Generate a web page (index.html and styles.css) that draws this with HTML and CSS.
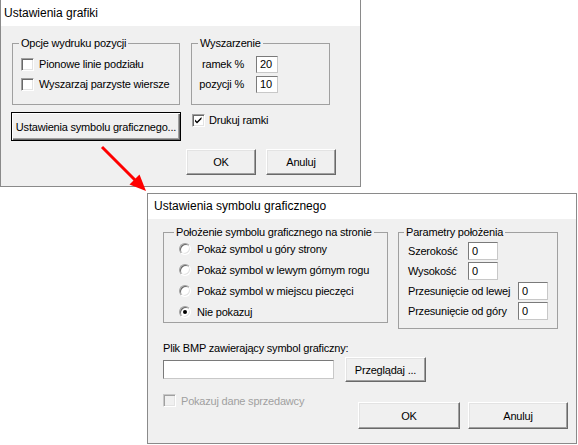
FILE: index.html
```html
<!DOCTYPE html>
<html lang="pl">
<head>
  <meta charset="UTF-8" />
  <title>Ustawienia grafiki</title>
  <link rel="stylesheet" href="styles.css">
</head>
<body>
  <div class="win win-main">
    <div class="title">Ustawienia grafiki</div>
    <div class="client main-client">
      <div class="groups">
        <div class="group group-print">
          <span class="legend">Opcje wydruku pozycji</span>
          <div class="rows">
            <div class="check"><span class="box"></span>Pionowe linie podziału</div>
            <div class="check"><span class="box"></span>Wyszarzaj parzyste wiersze</div>
          </div>
        </div>
        <div class="group group-gray">
          <span class="legend">Wyszarzenie</span>
          <div class="pct">
            <span class="pct-label">ramek %</span><span class="field field-pct">20</span>
            <span class="pct-label">pozycji %</span><span class="field field-pct">10</span>
          </div>
        </div>
      </div>
      <div class="mid-row">
        <button class="btn btn-default btn-symbol">Ustawienia symbolu graficznego...</button>
        <div class="check check-frames">
          <span class="box">
            <svg width="11" height="11" viewBox="0 0 11 11"><path d="M2 4.5 L4 6.5 L8.5 2 L8.5 4 L4 8.5 L2 6.5 Z" fill="#000"/></svg>
          </span>Drukuj ramki
        </div>
      </div>
      <div class="actions main-actions">
        <button class="btn btn-small">OK</button>
        <button class="btn btn-small">Anuluj</button>
      </div>
    </div>
  </div>

  <div class="win win-symbol">
    <div class="title">Ustawienia symbolu graficznego</div>
    <div class="client symbol-client">
      <div class="groups symbol-groups">
        <div class="group group-place">
          <span class="legend">Położenie symbolu graficznego na stronie</span>
          <div class="radios">
            <div class="radio"><span class="dot"></span>Pokaż symbol u góry strony</div>
            <div class="radio"><span class="dot"></span>Pokaż symbol w lewym górnym rogu</div>
            <div class="radio"><span class="dot"></span>Pokaż symbol w miejscu pieczęci</div>
            <div class="radio"><span class="dot on"></span>Nie pokazuj</div>
          </div>
        </div>
        <div class="group group-params">
          <span class="legend">Parametry położenia</span>
          <div class="params">
            <div class="param"><span class="param-label">Szerokość</span><span class="field field-param">0</span></div>
            <div class="param"><span class="param-label">Wysokość</span><span class="field field-param">0</span></div>
            <div class="param"><span class="param-label wide">Przesunięcie od lewej</span><span class="field field-param">0</span></div>
            <div class="param"><span class="param-label wide">Przesunięcie od góry</span><span class="field field-param">0</span></div>
          </div>
        </div>
      </div>
      <div class="file-label">Plik BMP zawierający symbol graficzny:</div>
      <div class="file-row">
        <span class="field field-file"></span>
        <button class="btn btn-browse">Przeglądaj ...</button>
      </div>
      <div class="bottom-row">
        <div class="check disabled"><span class="box"></span>Pokazuj dane sprzedawcy</div>
        <div class="actions symbol-actions">
          <button class="btn btn-wide">OK</button>
          <button class="btn btn-wide btn-cancel">Anuluj</button>
        </div>
      </div>
    </div>
  </div>

  <!-- red pointer from the first dialog to the second -->
  <svg class="arrow" width="578" height="445" viewBox="0 0 578 445">
    <line x1="102" y1="147" x2="137" y2="182" stroke="#ff0000" stroke-width="3"/>
    <polygon points="146,191 129.5,184.5 139.5,174.5" fill="#ff0000"/>
  </svg>
</body>
</html>
```

FILE: styles.css
```css
body {
  margin: 0;
  width: 578px;
  height: 445px;
  overflow: hidden;
  position: relative;
  background: #fff;
  color: #000;
  font-family: "Liberation Sans", Arial, sans-serif;
  font-size: 11px;
}

/* windows */
.win {
  box-sizing: border-box;
  border: 1px solid #8a8a8a;
  background: #f0f0f0;
  display: flex;
  flex-direction: column;
}
.win-main {
  width: 361px;
  height: 187px;
  border-top: none;
}
.win-symbol {
  width: 430px;
  height: 251px;
  margin: 6px 0 0 147px;
}
.title {
  background: #fff;
  font-size: 12px;
  height: 26px;
  line-height: 26px;
  padding-left: 3px;
}
.win-symbol .title {
  height: 25px;
  line-height: 25px;
  padding-left: 6px;
}
.client {
  flex: 1;
  letter-spacing: -0.2px;
  white-space: nowrap;
}
.main-client {
  padding: 17px 24px 0 10px;
}
.symbol-client {
  padding: 13px 8px 0 15px;
}

/* group boxes */
.groups {
  display: flex;
  align-items: flex-start;
}
.main-client .groups {
  margin-left: 1px;
  gap: 11px;
}
.symbol-groups {
  gap: 10px;
}
.group {
  box-sizing: border-box;
  border: 1px solid #a0a0a0;
}
.legend {
  display: block;
  width: max-content;
  margin: -8px 0 0 6px;
  padding: 0 2px;
  line-height: 14px;
  background: #f0f0f0;
}
.group-print { width: 168px; height: 62px; }
.group-gray { width: 139px; height: 62px; }
.group-place { width: 225px; height: 91px; }
.group-place .legend { margin-left: 10px; }
.group-params { width: 160px; height: 97px; }
.group-params .legend { margin-left: 5px; }

.rows {
  margin-top: 4px;
  padding-left: 8px;
}

/* checkboxes */
.check {
  display: flex;
  align-items: center;
  height: 20px;
}
.box {
  box-sizing: border-box;
  width: 13px;
  height: 13px;
  margin-right: 5px;
  background: #fff;
  border: 1px solid;
  border-color: #a0a0a0 #fff #fff #a0a0a0;
  box-shadow: inset 1px 1px #696969, inset -1px -1px #e3e3e3;
  display: flex;
  align-items: center;
  justify-content: center;
}
.box svg {
  display: block;
}
.check.disabled {
  color: #a0a0a0;
  height: 13px;
}
.check.disabled .box {
  background: #f0f0f0;
  border-color: #c8c8c8 #fff #fff #c8c8c8;
  box-shadow: inset 1px 1px #a0a0a0, inset -1px -1px #e3e3e3;
}

/* percent fields */
.pct {
  display: grid;
  grid-template-columns: 52px 22px;
  grid-auto-rows: 20px;
  column-gap: 12px;
  align-items: center;
  margin-top: 4px;
}
.pct-label {
  text-align: right;
}
.field {
  box-sizing: border-box;
  background: #fff;
  border: 1px solid;
  border-color: #7a7a7a #c8c8c8 #c8c8c8 #7a7a7a;
  padding-left: 3px;
  display: flex;
  align-items: center;
}
.field-pct {
  height: 17px;
}

/* buttons */
.btn {
  box-sizing: border-box;
  font: inherit;
  letter-spacing: inherit;
  color: #000;
  background: #f0f0f0;
  border: 1px solid;
  border-color: #fff #696969 #696969 #fff;
  box-shadow: inset -1px -1px #a0a0a0, inset 1px 1px #e3e3e3;
  padding: 0;
  margin: 0;
}
.btn-default {
  border-color: #000;
  box-shadow: inset 1px 1px #fff, inset -1px -1px #696969, inset -2px -2px #a0a0a0;
}
.mid-row {
  display: flex;
  align-items: flex-start;
  margin-top: 7px;
}
.btn-symbol {
  width: 170px;
  height: 29px;
}
.check-frames {
  margin: -2px 0 0 11px;
  height: 20px;
}
.check-frames .box {
  margin-right: 4px;
}
.actions {
  display: flex;
  justify-content: flex-end;
}
.main-actions {
  gap: 10px;
  margin-top: 8px;
}
.btn-small {
  width: 70px;
  height: 26px;
}

/* radio buttons */
.radios {
  margin-top: -1px;
  padding-left: 15px;
}
.radio {
  display: flex;
  align-items: center;
  height: 21px;
}
.dot {
  box-sizing: border-box;
  width: 12px;
  height: 12px;
  margin-right: 6px;
  border-radius: 50%;
  background: #fff;
  border: 1px solid;
  border-color: #a0a0a0 #fff #fff #a0a0a0;
  box-shadow: inset 1px 1px #696969, inset -1px -1px #e3e3e3;
  display: flex;
  align-items: center;
  justify-content: center;
}
.dot.on::after {
  content: "";
  width: 4px;
  height: 4px;
  border-radius: 50%;
  background: #000;
}

/* position parameters */
.params {
  margin-top: 2px;
  padding-left: 9px;
}
.param {
  display: flex;
  align-items: center;
  height: 20px;
}
.param-label {
  width: 60px;
}
.param-label.wide {
  width: 110px;
}
.field-param {
  width: 30px;
  height: 18px;
}

/* file picker */
.file-label {
  margin-top: 12px;
  line-height: 14px;
}
.file-row {
  display: flex;
  align-items: center;
  margin-top: 2px;
  gap: 11px;
}
.field-file {
  width: 171px;
  height: 19px;
}
.btn-browse {
  width: 81px;
  height: 25px;
}
.bottom-row {
  display: flex;
  align-items: flex-start;
  margin-top: 12px;
}
.symbol-actions {
  margin-left: auto;
  margin-top: 8px;
  gap: 8px;
}
.btn-wide {
  width: 102px;
  height: 27px;
}
.btn-cancel {
  width: 100px;
}

.arrow {
  position: absolute;
  left: 0;
  top: 0;
  pointer-events: none;
}
```
